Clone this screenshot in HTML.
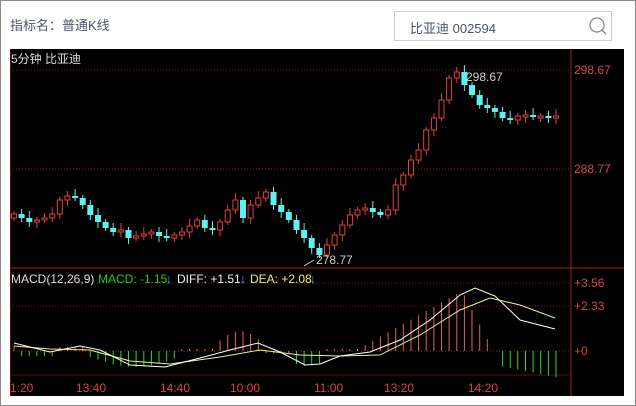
<!DOCTYPE html>
<html><head><meta charset="utf-8">
<style>
html,body{margin:0;padding:0;background:#fff;width:636px;height:406px;overflow:hidden;font-family:"Liberation Sans","Noto Sans CJK SC",sans-serif}
#frame{position:absolute;left:0;top:0;width:634px;height:404px;border:1px solid #8a8a8a}
#lbl{position:absolute;left:10px;top:15px;font-size:13px;color:#4a5568}
#search{position:absolute;left:394px;top:11px;width:216px;height:28px;border:1px solid #cfcfcf;background:#fff}
#search span{position:absolute;left:15px;top:6px;font-size:13px;color:#4a5568}
svg{position:absolute;left:0;top:0}
</style></head><body>
<div id="frame"></div>
<div id="lbl">指标名：普通K线</div>
<div id="search"><span>比亚迪 002594</span>
<svg width="216" height="28" style="left:0;top:0"><circle cx="202" cy="13" r="7" fill="none" stroke="#888" stroke-width="1.3"/><line x1="207" y1="18" x2="211" y2="22" stroke="#888" stroke-width="1.5"/></svg></div>
<svg id="c" width="636" height="406" style="top:0;left:0">
<rect x="10" y="49" width="614" height="347" fill="#000"/>
<g stroke="#7a1e1e" stroke-dasharray="1,2" stroke-width="1">
<line x1="10" y1="70" x2="570" y2="70"/><line x1="10" y1="169" x2="570" y2="169"/>
<line x1="10" y1="283" x2="570" y2="283"/><line x1="10" y1="306" x2="570" y2="306"/><line x1="10" y1="351" x2="570" y2="351"/>
</g>
<line x1="571" y1="49" x2="571" y2="396" stroke="#9a2020"/>
<line x1="10" y1="268" x2="624" y2="268" stroke="#b02020"/>
<line x1="10" y1="375" x2="571" y2="375" stroke="#5a1010"/>
<line x1="10.5" y1="49" x2="10.5" y2="396" stroke="#5a1010"/>
<g font-size="12" fill="#d84545" font-family="Liberation Sans,sans-serif">
<text x="574" y="74">298.67</text><text x="574" y="173">288.77</text>
<text x="574" y="287">+3.56</text><text x="574" y="310">+2.33</text><text x="574" y="355">+0</text>
<text x="10" y="392">1:20</text><text x="76" y="392">13:40</text><text x="160" y="392">14:40</text><text x="230" y="392">10:00</text><text x="314" y="392">11:00</text><text x="384" y="392">13:20</text><text x="468" y="392">14:20</text>
</g>
<text x="11" y="63" font-size="12" fill="#ddd" font-family="Liberation Sans,Noto Sans CJK SC,sans-serif">5分钟  比亚迪</text>
<g font-size="12" font-family="Liberation Sans,sans-serif">
<text x="11" y="283" fill="#ddd">MACD(12,26,9)</text>
<text x="98" y="283" fill="#22cc22">MACD: -1.15</text><text x="166" y="283" fill="#4ab0ff">↓</text>
<text x="177" y="283" fill="#eee">DIFF: +1.51</text><text x="240" y="283" fill="#4ab0ff">↓</text>
<text x="250" y="283" fill="#f0f060">DEA: +2.08</text><text x="310" y="283" fill="#4ab0ff">↓</text>
</g>
<g id="cand"></g><g id="hist"></g>
<text x="466" y="81" font-size="12" fill="#ccc">298.67</text>
<text x="316" y="264" font-size="12" fill="#ccc">278.77</text>
<line x1="314" y1="260" x2="304" y2="266" stroke="#ccc"/>
<polyline fill="none" stroke="#f0f080" stroke-width="1" points="14,346 50,349 90,350 130,361 170,364 220,357 260,350 300,355 340,356 380,355 420,335 460,310 490,298 520,305 555,318"/>
<polyline fill="none" stroke="#fff" stroke-width="1" points="14,343 50,352 80,346 100,350 130,365 165,367 200,358 230,350 258,343 280,352 305,365 320,364 340,356 370,352 400,340 430,320 460,295 475,288 495,296 520,320 555,329"/>
</svg>
<script>
(function(){
var cl=[214,218,222,220,218,214,200,196,198,205,215,222,228,232,230,238,236,234,232,236,238,235,232,226,220,228,230,222,210,200,218,205,198,192,205,212,220,230,238,248,255,245,235,225,215,210,208,212,215,210,185,175,160,150,130,118,100,78,72,85,95,105,108,112,118,120,116,115,117,116,117,116];
var s='',h='',n=cl.length,dx=(556-14)/(n-1);
for(var i=0;i<n;i++){var x=14+i*dx,o=i?cl[i-1]:cl[0]+4,c=cl[i];var tp=Math.min(o,c),bt=Math.max(o,c);if(bt-tp<2)bt=tp+2;
var up=c<o;var col=up?'#e04040':'#5ff0f0';var hi=tp-3-(i%3)*2,lo=bt+3+(i%4);
s+='<line x1="'+x.toFixed(1)+'" y1="'+hi+'" x2="'+x.toFixed(1)+'" y2="'+lo+'" stroke="'+col+'"/>';
s+=up?'<rect x="'+(x-2.5).toFixed(1)+'" y="'+tp+'" width="5" height="'+(bt-tp)+'" fill="#000" stroke="'+col+'"/>':'<rect x="'+(x-3).toFixed(1)+'" y="'+tp+'" width="6" height="'+(bt-tp)+'" fill="'+col+'"/>';}
document.getElementById('cand').innerHTML=s;
function v(x){if(x<20)return 5;if(x<58)return -5;if(x<90)return 4;if(x<180)return -(6+10*Math.sin((x-90)/90*Math.PI));if(x<215)return 2;if(x<265)return 6+14*Math.sin((x-215)/50*Math.PI);if(x<290)return -2;if(x<325)return -(10+5*Math.sin((x-290)/35*Math.PI));if(x<362)return 2;if(x<462)return 4+(x-362)*0.56;if(x<492)return 60-(x-462)*1.9;if(x<500)return 0;return -(15+(x-500)*0.2);}
for(var i=0;i<n;i++){var x=14+i*dx,y=v(x);if(Math.abs(y)<1)continue;var c=y>0?'#e86060':'#22dd22';h+='<line x1="'+x.toFixed(1)+'" y1="351" x2="'+x.toFixed(1)+'" y2="'+(351-y).toFixed(1)+'" stroke="'+c+'"/>';}
document.getElementById('hist').innerHTML=h;
})();
</script>
</body></html>
